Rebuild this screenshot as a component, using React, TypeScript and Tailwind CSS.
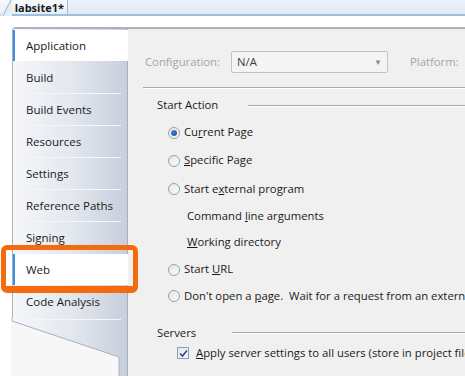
import type { ReactNode } from 'react';

const font = { fontFamily: '"Open Sans", "Noto Sans", sans-serif' };

function Radio({ checked }: { checked?: boolean }) {
  return (
    <span className="flex h-[12px] w-[12px] shrink-0 items-center justify-center rounded-full border border-[#9aa0a8] bg-gradient-to-br from-[#e6e6e6] to-[#fafafa]">
      {checked && (
        <span className="h-[6px] w-[6px] rounded-full bg-gradient-to-br from-[#4d8fd6] to-[#1b4f8f]" />
      )}
    </span>
  );
}

function TextBox() {
  return <div className="h-[22px] w-[160px] shrink-0 rounded-[2px] border border-[#b9b9b9] bg-[#f4f4f4]" />;
}

function Row({ h, indent, children, box }: { h: number; indent?: boolean; children: ReactNode; box?: boolean }) {
  return (
    <div className="flex items-center" style={{ height: h }}>
      <div className={`flex flex-1 items-center gap-[4px] ${indent ? 'pl-[19px]' : ''}`}>{children}</div>
      {box && <TextBox />}
    </div>
  );
}

const tabs = [
  'Application',
  'Build',
  'Build Events',
  'Resources',
  'Settings',
  'Reference Paths',
  'Signing',
  'Web',
  'Code Analysis',
];

export default function App() {
  return (
    <div className="relative h-[376px] w-[465px] overflow-hidden bg-white text-[11.3px] text-[#1a1a1a]" style={font}>
      <div className="w-[640px]">
        {/* document tab strip */}
        <div className="flex h-[16px] border-b-2 border-[#9dbfdc] bg-gradient-to-b from-[#eef3fa] to-[#dfe8f4]">
          <div className="relative flex w-[68px] items-end justify-end border-r border-[#a7b8cc] bg-gradient-to-b from-[#f7fafd] to-[#e6eef8] pr-[3px]">
            <svg className="absolute left-0 top-0" width="12" height="16">
              <path d="M0 16 L10 0 L12 0 L12 16 Z" fill="#e6eef8" />
              <path d="M3 16 L11 0" stroke="#9fb1c6" strokeWidth="1" />
            </svg>
            <span className="relative text-[11px] leading-[13px] font-bold">labsite1*</span>
          </div>
        </div>

        {/* property pages */}
        <div className="ml-[12px] mt-[11px] flex h-[349px] rounded-tl-[4px] border-t-2 border-[#aab2bd]">
          <div className="flex w-[115px] shrink-0 flex-col bg-gradient-to-r from-[#f5f7fa] via-[#e4e8ef] to-[#c7cfdc]">
            <div className="flex flex-col border-l border-[#a8b0bc] pt-[1px]">
              {tabs.map((t) => {
                const sel = t === 'Application' || t === 'Web';
                return (
                  <div key={t} className="relative h-[32px]">
                    <div
                      className={`flex h-[31px] items-center text-[11.5px] ${
                        sel ? '-mr-[1px] border-l-2 border-[#3a8ee6] bg-white pl-[11px]' : 'pl-[13px]'
                      }`}
                    >
                      {t}
                    </div>
                    {!sel && t !== 'Signing' && t !== 'Code Analysis' && (
                      <div className="absolute bottom-0 left-[5px] right-[6px] h-[1px] bg-[#f4f6f9]" />
                    )}
                    {t === 'Code Analysis' && (
                      <div className="absolute -bottom-[2px] left-[5px] right-[6px] h-[1px] bg-[#f4f6f9]" />
                    )}
                  </div>
                );
              })}
            </div>
            <svg width="115" height="60" className="-ml-px">
              <polygon points="0,3 108,39 108,60 0,60" fill="#f7f7f7" />
              <path d="M1 0 L1 3 L108 39 L108 60" fill="none" stroke="#aab1bd" strokeWidth="1" />
            </svg>
          </div>

          <div className="flex-1 border-l border-[#aab0ba] bg-[#f0f0f0]">
            {/* configuration row */}
            <div className="flex h-[58px] items-center pl-[17px] pt-[8px] text-[#a5a5a5]">
              <span className="w-[86px]">Configuration:</span>
              <div className="flex h-[22px] w-[157px] items-center justify-between rounded-[2px] border border-[#c3c3c3] bg-[#f4f4f4] pl-[5px] pr-[5px] text-[#3a3a3a]">
                <span>N/A</span>
                <span className="text-[8px] text-[#8a8a8a]">▼</span>
              </div>
              <span className="ml-[22px]">Platform:</span>
            </div>
            <div className="ml-[15px] h-[2px] border-t border-[#a9a9a9] bg-white" />

            {/* start action */}
            <div className="flex h-[30px] items-center pl-[29px] pt-[3px]">
              <span>Start Action</span>
              <div className="ml-[30px] h-[2px] flex-1 border-t border-[#a9a9a9] bg-white" />
            </div>

            <div className="pl-[40px]">
              <Row h={27}>
                <Radio checked />
                <span>
                  Cu<u>r</u>rent Page
                </span>
              </Row>
              <Row h={29} box>
                <Radio />
                <span>
                  <u>S</u>pecific Page
                </span>
              </Row>
              <Row h={28} box>
                <Radio />
                <span>
                  Start e<u>x</u>ternal program
                </span>
              </Row>
              <Row h={26} indent box>
                <span>
                  Command <u>l</u>ine arguments
                </span>
              </Row>
              <Row h={27} indent box>
                <span>
                  <u>W</u>orking directory
                </span>
              </Row>
              <Row h={27} box>
                <Radio />
                <span>
                  Start <u>U</u>RL
                </span>
              </Row>
              <Row h={26}>
                <Radio />
                <span className="whitespace-nowrap">
                  Don't open a <u>p</u>age.&nbsp; Wait for a request from an external application.
                </span>
              </Row>
            </div>

            {/* servers */}
            <div className="mt-[16px] flex h-[16px] items-center pl-[29px]">
              <span>Servers</span>
              <div className="ml-[36px] h-[2px] flex-1 border-t border-[#a9a9a9] bg-white" />
            </div>
            <div className="mt-[4px] flex h-[16px] items-center gap-[7px] pl-[49px]">
              <span className="flex h-[12px] w-[12px] shrink-0 items-center justify-center border border-[#8e9db4] bg-gradient-to-br from-[#dfe6f0] to-[#f8fafc]">
                <svg width="9" height="9" viewBox="0 0 9 9">
                  <path d="M1 4.5 L3.5 7 L8 1.5" fill="none" stroke="#2c4a7a" strokeWidth="1.6" />
                </svg>
              </span>
              <span className="whitespace-nowrap">
                <u>A</u>pply server settings to all users (store in project file)
              </span>
            </div>
          </div>
        </div>
      </div>

      {/* highlight around Web */}
      <div className="absolute left-[1px] top-[245px] h-[48px] w-[137px] rounded-[6px] border-[5px] border-b-[7px] border-[#f56a0c]" />
    </div>
  );
}
